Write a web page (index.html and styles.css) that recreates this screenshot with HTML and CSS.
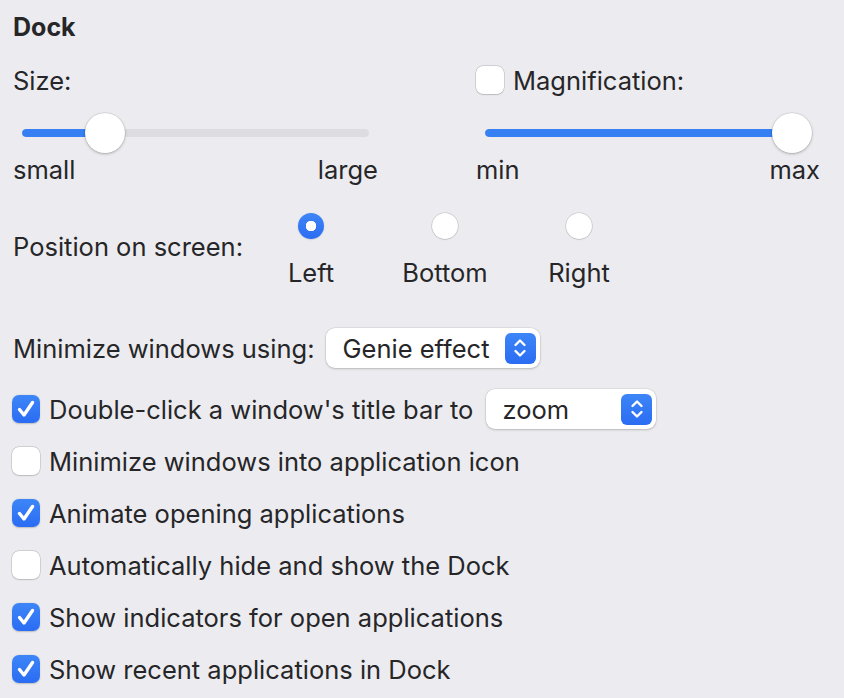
FILE: index.html
```html
<!DOCTYPE html>
<html lang="en">
<head>
<meta charset="utf-8">
<title>Dock</title>
<link rel="stylesheet" href="styles.css">
</head>
<body>
<div class="panel">
  <div class="title">Dock</div>

  <div class="slider-groups">
    <div class="slider-group">
      <div class="group-label">Size:</div>
      <div class="slider">
        <div class="track"><div class="fill" style="width:83px"></div></div>
        <div class="knob" style="left:72px"></div>
      </div>
      <div class="ends"><span>small</span><span>large</span></div>
    </div>
    <div class="slider-group">
      <label class="group-label check-label">
        <span class="checkbox"></span>
        <span>Magnification:</span>
      </label>
      <div class="slider">
        <div class="track"><div class="fill" style="width:320px"></div></div>
        <div class="knob" style="left:296px"></div>
      </div>
      <div class="ends"><span>min</span><span>max</span></div>
    </div>
  </div>

  <div class="position-row">
    <div class="position-label">Position on screen:</div>
    <div class="radios">
      <div class="radio-item"><span class="radio checked"></span><span class="radio-text">Left</span></div>
      <div class="radio-item"><span class="radio"></span><span class="radio-text">Bottom</span></div>
      <div class="radio-item"><span class="radio"></span><span class="radio-text">Right</span></div>
    </div>
  </div>

  <div class="popup-row minimize-row">
    <span>Minimize windows using:</span>
    <div class="popup popup-genie">
      <span class="popup-text">Genie effect</span>
      <span class="stepper">
        <svg width="14" height="22" viewBox="0 0 14 22"><path d="M2.5 8 L7 3.5 L11.5 8 M2.5 14 L7 18.5 L11.5 14" fill="none" stroke="#fff" stroke-width="2.4" stroke-linecap="round" stroke-linejoin="round"/></svg>
      </span>
    </div>
  </div>

  <div class="check-row dbl-row">
    <span class="checkbox checked"><svg width="28" height="28" viewBox="0 0 28 28"><path d="M7.5 14.5 L12 20 L20.5 7.5" fill="none" stroke="#fff" stroke-width="3.4" stroke-linecap="round" stroke-linejoin="round"/></svg></span>
    <span>Double-click a window's title bar to</span>
    <div class="popup popup-zoom">
      <span class="popup-text">zoom</span>
      <span class="stepper">
        <svg width="14" height="22" viewBox="0 0 14 22"><path d="M2.5 8 L7 3.5 L11.5 8 M2.5 14 L7 18.5 L11.5 14" fill="none" stroke="#fff" stroke-width="2.4" stroke-linecap="round" stroke-linejoin="round"/></svg>
      </span>
    </div>
  </div>

  <div class="check-row">
    <span class="checkbox"></span>
    <span>Minimize windows into application icon</span>
  </div>
  <div class="check-row">
    <span class="checkbox checked"><svg width="28" height="28" viewBox="0 0 28 28"><path d="M7.5 14.5 L12 20 L20.5 7.5" fill="none" stroke="#fff" stroke-width="3.4" stroke-linecap="round" stroke-linejoin="round"/></svg></span>
    <span>Animate opening applications</span>
  </div>
  <div class="check-row">
    <span class="checkbox"></span>
    <span>Automatically hide and show the Dock</span>
  </div>
  <div class="check-row">
    <span class="checkbox checked"><svg width="28" height="28" viewBox="0 0 28 28"><path d="M7.5 14.5 L12 20 L20.5 7.5" fill="none" stroke="#fff" stroke-width="3.4" stroke-linecap="round" stroke-linejoin="round"/></svg></span>
    <span>Show indicators for open applications</span>
  </div>
  <div class="check-row">
    <span class="checkbox checked"><svg width="28" height="28" viewBox="0 0 28 28"><path d="M7.5 14.5 L12 20 L20.5 7.5" fill="none" stroke="#fff" stroke-width="3.4" stroke-linecap="round" stroke-linejoin="round"/></svg></span>
    <span>Show recent applications in Dock</span>
  </div>
</div>
</body>
</html>
```

FILE: styles.css
```css
* { box-sizing: border-box; }

html, body {
  margin: 0;
  padding: 0;
  background: #ececf0;
}

body {
  font-family: Inter, "Noto Sans", "Liberation Sans", sans-serif;
  font-size: 25.5px;
  color: #262628;
  width: 844px;
  height: 698px;
  overflow: hidden;
}

.panel {
  padding-left: 13px;
}

.title {
  height: 54px;
  line-height: 54px;
  font-weight: 700;
  font-size: 25px;
}

.slider-groups {
  display: grid;
  grid-template-columns: 365px 344px;
  column-gap: 98px;
}

.group-label {
  height: 52px;
  display: flex;
  align-items: center;
}

.check-label {
  gap: 9px;
}

.slider {
  position: relative;
  height: 54px;
}

.track {
  position: absolute;
  left: 9px;
  right: 9px;
  top: 23px;
  height: 8px;
  border-radius: 4px;
  background: #dcdce1;
  overflow: hidden;
}

.fill {
  height: 100%;
  background: #3680f4;
  border-radius: 4px;
}

.knob {
  position: absolute;
  top: 7px;
  width: 40px;
  height: 40px;
  border-radius: 50%;
  background: #fff;
  box-shadow: 0 0 0 0.5px rgba(0,0,0,0.12), 0 1px 3px rgba(0,0,0,0.25);
}

.ends {
  height: 20px;
  line-height: 20px;
  display: flex;
  justify-content: space-between;
}

.position-row {
  display: flex;
  padding-top: 33px;
  height: 108px;
}

.position-label {
  width: 231px;
  margin-top: 19px;
  line-height: 30px;
  height: 30px;
  white-space: nowrap;
}

.radios {
  display: flex;
}

.radio-item {
  width: 134px;
  display: flex;
  flex-direction: column;
  align-items: center;
}

.radio {
  width: 26px;
  height: 26px;
  border-radius: 50%;
  background: #fff;
  box-shadow: 0 0 0 0.5px rgba(0,0,0,0.18), 0 0.5px 1.5px rgba(0,0,0,0.15);
}

.radio.checked {
  background: radial-gradient(circle, #fff 0 5px, transparent 5.5px), linear-gradient(#3d86f7, #2a6cf3);
  box-shadow: 0 0.5px 1.5px rgba(0,0,0,0.2);
}

.radio-text {
  margin-top: 19px;
  line-height: 30px;
}

.popup-row,
.check-row {
  display: flex;
  align-items: center;
}

.minimize-row {
  margin-top: 40px;
  height: 40px;
  gap: 11px;
}

.dbl-row {
  margin-top: 15px;
}

.check-row {
  height: 52px;
  gap: 9px;
  margin-left: -1px;
  white-space: nowrap;
}

.checkbox {
  width: 28px;
  height: 28px;
  flex: none;
  border-radius: 7px;
  background: #fff;
  box-shadow: 0 0 0 0.5px rgba(0,0,0,0.2), 0 0.5px 1.5px rgba(0,0,0,0.12);
  display: inline-flex;
}

.checkbox.checked {
  background: linear-gradient(#3d86f7, #2a6cf3);
  box-shadow: 0 0.5px 1.5px rgba(0,0,0,0.2);
}

.popup {
  height: 40px;
  flex: none;
  background: #fff;
  border-radius: 9px;
  box-shadow: 0 0 0 0.5px rgba(0,0,0,0.1), 0 1px 2.5px rgba(0,0,0,0.18);
  display: flex;
  align-items: center;
  justify-content: space-between;
  padding: 0 4px 0 17px;
}

.popup-genie {
  width: 214px;
}

.dbl-row .popup {
  margin-left: 4px;
}

.popup-zoom {
  width: 170px;
  padding-left: 16px;
}

.stepper {
  width: 31px;
  height: 31px;
  border-radius: 6px;
  background: linear-gradient(#3d86f7, #2a6cf3);
  display: flex;
  align-items: center;
  justify-content: center;
}
```
